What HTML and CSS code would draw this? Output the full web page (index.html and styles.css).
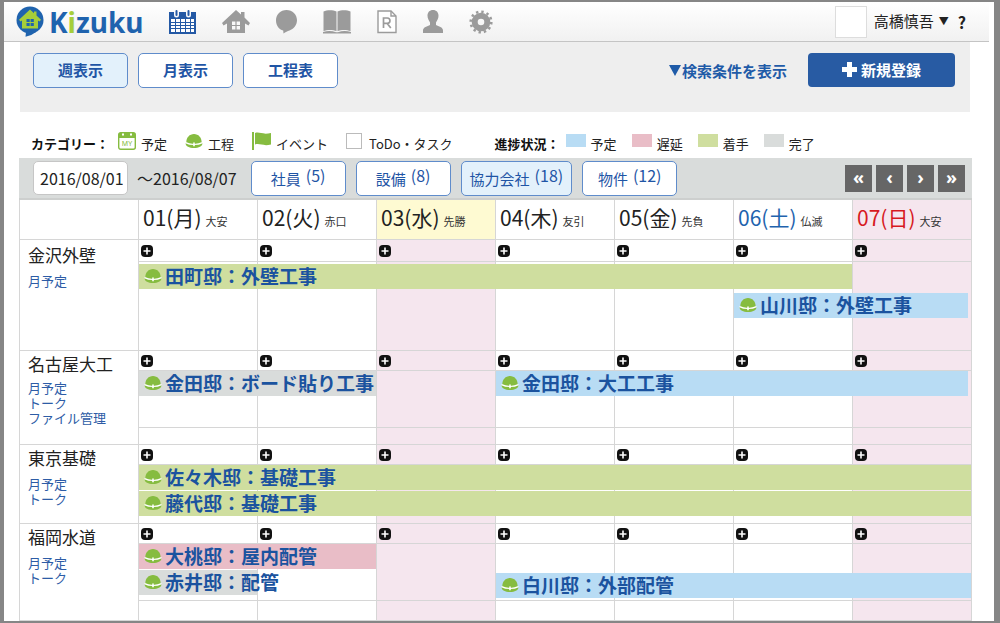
FILE: index.html
```html
<!DOCTYPE html>
<html lang="ja">
<head>
<meta charset="utf-8">
<meta name="viewport" content="width=device-width, initial-scale=1">
<title>Kizuku</title>
<link rel="stylesheet" href="styles.css">
</head>
<body>
<svg class="defs" aria-hidden="true">
  <symbol id="hat" viewBox="0 0 18 14">
    <path fill="#86bc40" d="M1.300 8.500C1.300 3.500 4.500 0 9 0s7.700 3.500 7.700 8.500l.8 1C17 12.300 14 14 9 14S1 12.300.5 9.500z"/>
    <path fill="none" stroke="#fff" stroke-width="1.200" d="M.5 8.600c4.700 2.500 12.300 2.500 17 0"/>
    <path fill="#fff" d="M8.200 8.500h1.600v3.700H8.200z"/>
  </symbol>
  <symbol id="plus" viewBox="0 0 12 12">
    <rect width="12" height="12" rx="4" fill="#111"/>
    <path d="M6 2.500v7M2.500 6h7" stroke="#fff" stroke-width="1.600"/>
  </symbol>
</svg>
<div class="window">
  <header class="topbar">
    <a class="logo" href="#">
      <svg width="28" height="31" viewBox="0 0 28 31" aria-hidden="true">
        <circle cx="14" cy="14" r="13.500" fill="#1f63ae"/>
        <path fill="#1f63ae" d="M8 25l12 1q-4 3.500-10.500 4.800L10 26z"/>
        <path fill="#a6ce39" d="M14 3.500l4 3.700V5.500h2.500v4l4.500 4.300-1.500 1.700-1.500-1v8H6v-8l-1.500 1L3 13.800z"/>
        <path fill="#1f63ae" d="M10.500 13h3.200v3h-3.200zM14.600 13h3.200v3h-3.200zM10.500 17h3.200v3h-3.200zM14.600 17h3.200v3h-3.200z"/>
      </svg>
      <span class="logo-text">K<span class="logo-i">i</span>zuku</span>
    </a>
    <nav class="nav">
      <a href="#" class="active" aria-label="カレンダー"><svg width="27" height="24" viewBox="0 0 27 24">
        <path fill="currentColor" d="M0 2h5v3a2.500 2.500 0 0 0 5 0V2h7v3a2.500 2.500 0 0 0 5 0V2h5v22H0z"/>
        <rect x="6.500" width="2" height="6" rx="1" fill="currentColor"/><rect x="18.500" width="2" height="6" rx="1" fill="currentColor"/>
        <path fill="#fff" d="M2 9h4v3H2zM7 9h4v3H7zM12 9h4v3h-4zM17 9h4v3h-4zM22 9h3v3h-3zM2 13h4v2H2zM7 13h4v2H7zM12 13h4v2h-4zM17 13h4v2h-4zM22 13h3v2h-3zM2 16h4v2H2zM7 16h4v2H7zM12 16h4v2h-4zM17 16h4v2h-4zM22 16h3v2h-3zM2 19h4v3H2zM7 19h4v3H7zM12 19h4v3h-4zM17 19h4v3h-4zM22 19h3v3h-3z"/></svg></a>
      <a href="#" aria-label="ホーム"><svg width="28" height="24" viewBox="0 0 28 24">
        <path fill="currentColor" d="M14 0l5 4.500V2h3.500v5.500L28 13l-1.500 2.500-3.500-2V23H5v-9.500l-3.500 2L0 13z"/>
        <path fill="#f8f8f8" d="M10 11.500h3.400v3.400H10zM14.600 11.500H18v3.400h-3.400zM10 16h3.400v3.400H10zM14.600 16H18v3.400h-3.400z"/></svg></a>
      <a href="#" aria-label="トーク"><svg width="21" height="24" viewBox="0 0 21 24">
        <path fill="currentColor" d="M10.500 0C16.500 0 21 4.500 21 10.300c0 5-3.500 8.700-7.500 10.200-2 .8-4 1.500-6 3l-.3-3C3 19.500 0 15.500 0 10.300 0 4.500 4.500 0 10.500 0z"/></svg></a>
      <a href="#" aria-label="台帳"><svg width="28" height="24" viewBox="0 0 28 24">
        <path fill="currentColor" d="M.5 1.500C4-.3 10-.3 13.500 1.500V21C10 19.500 4 19.500.5 21zM14.500 1.500C18-.3 24-.3 27.500 1.500V21c-3.500-1.500-9.500-1.500-13 0z"/>
        <path fill="currentColor" d="M0 22c5-1.500 9-1.200 13 .3h2c4-1.500 8-1.800 13-.3v1.500H0z"/></svg></a>
      <a href="#" aria-label="報告書"><svg width="20" height="24" viewBox="0 0 20 24">
        <path fill="#fff" stroke="currentColor" stroke-width="1.400" d="M1 1h13l5 5v16.500H1z"/>
        <path fill="none" stroke="currentColor" stroke-width="1.400" d="M14 1v5h5"/>
        <path fill="none" stroke="currentColor" stroke-width="1.700" d="M6.500 18V8h3.800a2.600 2.600 0 0 1 0 5.300H6.500M10 13.300l3.800 4.700"/></svg></a>
      <a href="#" aria-label="プロフィール"><svg width="20" height="24" viewBox="0 0 20 24">
        <path fill="currentColor" d="M10 0c3.400 0 5.500 2.300 5.500 5.800 0 3-1.500 5-2.500 6.700v2.500c2.500 1.500 7 2 7 5.500V23H0v-2.500C0 17 4.500 16.500 7 15v-2.500C6 10.800 4.500 8.800 4.500 5.800 4.500 2.300 6.600 0 10 0z"/></svg></a>
      <a href="#" aria-label="設定"><svg width="24" height="24" viewBox="0 0 24 24">
        <circle cx="12" cy="12" r="10.300" fill="none" stroke="currentColor" stroke-width="2.600" stroke-dasharray="2.400 2.993"/>
        <circle cx="12" cy="12" r="6.300" fill="none" stroke="currentColor" stroke-width="6"/></svg></a>
    </nav>
    <div class="account">
      <span class="avatar"></span>
      <button type="button" class="user">高橋慎吾<span class="caret">▼</span></button>
      <a class="help" href="#">?</a>
    </div>
  </header>

  <main class="main">
    <section class="panel">
      <div class="views">
        <button type="button" class="btn selected">週表示</button>
        <button type="button" class="btn">月表示</button>
        <button type="button" class="btn">工程表</button>
      </div>
      <div class="actions">
        <a class="search-toggle" href="#"><svg width="12" height="11" viewBox="0 0 12 11" aria-hidden="true"><path fill="currentColor" d="M0 0h12L6 11z"/></svg>検索条件を表示</a>
        <button type="button" class="create"><svg width="15" height="15" viewBox="0 0 15 15" aria-hidden="true"><path fill="#fff" d="M5 0h5v5h5v5h-5v5H5v-5H0V5h5z"/></svg>新規登録</button>
      </div>
    </section>

    <section class="legend">
      <div class="legend-group">
        <strong>カテゴリー：</strong>
        <span class="key"><svg width="18" height="18" viewBox="0 0 18 18" aria-hidden="true">
          <rect x=".7" y=".7" width="16.600" height="16.600" rx="2" fill="#fff" stroke="#86bc40" stroke-width="1.400"/>
          <path fill="#86bc40" d="M1 1h16v5H1z"/><path fill="#fff" d="M4 1.500h2v2H4zM12 1.500h2v2h-2z"/>
          <text class="my" x="9" y="14" text-anchor="middle">MY</text></svg><span>予定</span></span>
        <span class="key"><svg width="18" height="14"><use href="#hat"/></svg><span>工程</span></span>
        <span class="key"><svg width="19" height="18" viewBox="0 0 19 18" aria-hidden="true">
          <path fill="#86bc40" d="M0 0h2v18H0zM3 1c5-1.500 7 2 16 0v11.500c-8 2-11-1.500-16 0z"/></svg><span>イベント</span></span>
        <label class="key todo"><input type="checkbox"><span>ToDo・タスク</span></label>
      </div>
      <div class="legend-group status">
        <strong>進捗状況：</strong>
        <span class="key"><i class="swatch blue"></i><span>予定</span></span>
        <span class="key"><i class="swatch pink"></i><span>遅延</span></span>
        <span class="key"><i class="swatch green"></i><span>着手</span></span>
        <span class="key"><i class="swatch gray"></i><span>完了</span></span>
      </div>
    </section>

    <section class="filters">
      <input class="date" type="text" value="2016/08/01" aria-label="開始日">
      <span class="until">～2016/08/07</span>
      <div class="groups">
        <button type="button" class="btn">社員<span class="count">(5)</span></button>
        <button type="button" class="btn">設備<span class="count">(8)</span></button>
        <button type="button" class="btn selected">協力会社<span class="count">(18)</span></button>
        <button type="button" class="btn">物件<span class="count">(12)</span></button>
      </div>
      <div class="pager">
        <button type="button" aria-label="前の週">«</button>
        <button type="button" aria-label="前の日">‹</button>
        <button type="button" aria-label="次の日">›</button>
        <button type="button" aria-label="次の週">»</button>
      </div>
    </section>

    <table class="schedule">
      <thead>
        <tr>
          <td></td>
          <th scope="col">01(月)<small>大安</small></th>
          <th scope="col">02(火)<small>赤口</small></th>
          <th scope="col" class="today">03(水)<small>先勝</small></th>
          <th scope="col">04(木)<small>友引</small></th>
          <th scope="col">05(金)<small>先負</small></th>
          <th scope="col" class="sat">06(土)<small>仏滅</small></th>
          <th scope="col" class="sun">07(日)<small>大安</small></th>
        </tr>
      </thead>
      <tbody>
        <tr class="roomy">
          <th scope="row"><div class="name">金沢外壁</div><a href="#">月予定</a></th>
          <td><div class="add"><button type="button" aria-label="追加"><svg><use href="#plus"/></svg></button></div>
            <div class="lanes"><a href="#" class="bar green" style="--span:6"><svg><use href="#hat"/></svg>田町邸：外壁工事</a></div></td>
          <td><div class="add"><button type="button" aria-label="追加"><svg><use href="#plus"/></svg></button></div></td>
          <td class="off"><div class="add"><button type="button" aria-label="追加"><svg><use href="#plus"/></svg></button></div></td>
          <td><div class="add"><button type="button" aria-label="追加"><svg><use href="#plus"/></svg></button></div></td>
          <td><div class="add"><button type="button" aria-label="追加"><svg><use href="#plus"/></svg></button></div></td>
          <td><div class="add"><button type="button" aria-label="追加"><svg><use href="#plus"/></svg></button></div>
            <div class="lanes"><div class="empty"></div><a href="#" class="bar blue short" style="--span:2"><svg><use href="#hat"/></svg>山川邸：外壁工事</a></div></td>
          <td class="off"><div class="add"><button type="button" aria-label="追加"><svg><use href="#plus"/></svg></button></div></td>
        </tr>
        <tr class="ruled compact">
          <th scope="row"><div class="name">名古屋大工</div><a href="#">月予定</a><a href="#">トーク</a><a href="#">ファイル管理</a></th>
          <td><div class="add"><button type="button" aria-label="追加"><svg><use href="#plus"/></svg></button></div>
            <div class="lanes"><a href="#" class="bar gray" style="--span:2"><svg><use href="#hat"/></svg>金田邸：ボード貼り工事</a></div></td>
          <td><div class="add"><button type="button" aria-label="追加"><svg><use href="#plus"/></svg></button></div><div class="lanes"></div></td>
          <td class="off"><div class="add"><button type="button" aria-label="追加"><svg><use href="#plus"/></svg></button></div><div class="lanes"></div></td>
          <td><div class="add"><button type="button" aria-label="追加"><svg><use href="#plus"/></svg></button></div>
            <div class="lanes"><a href="#" class="bar blue short" style="--span:4"><svg><use href="#hat"/></svg>金田邸：大工工事</a></div></td>
          <td><div class="add"><button type="button" aria-label="追加"><svg><use href="#plus"/></svg></button></div><div class="lanes"></div></td>
          <td><div class="add"><button type="button" aria-label="追加"><svg><use href="#plus"/></svg></button></div><div class="lanes"></div></td>
          <td class="off"><div class="add"><button type="button" aria-label="追加"><svg><use href="#plus"/></svg></button></div><div class="lanes"></div></td>
        </tr>
        <tr>
          <th scope="row"><div class="name">東京基礎</div><a href="#">月予定</a><a href="#">トーク</a></th>
          <td><div class="add"><button type="button" aria-label="追加"><svg><use href="#plus"/></svg></button></div>
            <div class="lanes"><a href="#" class="bar green" style="--span:7"><svg><use href="#hat"/></svg>佐々木邸：基礎工事</a><a href="#" class="bar green" style="--span:7"><svg><use href="#hat"/></svg>藤代邸：基礎工事</a></div></td>
          <td><div class="add"><button type="button" aria-label="追加"><svg><use href="#plus"/></svg></button></div></td>
          <td class="off"><div class="add"><button type="button" aria-label="追加"><svg><use href="#plus"/></svg></button></div></td>
          <td><div class="add"><button type="button" aria-label="追加"><svg><use href="#plus"/></svg></button></div></td>
          <td><div class="add"><button type="button" aria-label="追加"><svg><use href="#plus"/></svg></button></div></td>
          <td><div class="add"><button type="button" aria-label="追加"><svg><use href="#plus"/></svg></button></div></td>
          <td class="off"><div class="add"><button type="button" aria-label="追加"><svg><use href="#plus"/></svg></button></div></td>
        </tr>
        <tr class="ruled">
          <th scope="row"><div class="name">福岡水道</div><a href="#">月予定</a><a href="#">トーク</a></th>
          <td><div class="add"><button type="button" aria-label="追加"><svg><use href="#plus"/></svg></button></div>
            <div class="lanes"><a href="#" class="bar pink" style="--span:2"><svg><use href="#hat"/></svg>大桃邸：屋内配管</a><a href="#" class="bar gray" style="--span:1"><svg><use href="#hat"/></svg>赤井邸：配管</a></div></td>
          <td><div class="add"><button type="button" aria-label="追加"><svg><use href="#plus"/></svg></button></div><div class="lanes"></div></td>
          <td class="off"><div class="add"><button type="button" aria-label="追加"><svg><use href="#plus"/></svg></button></div><div class="lanes"></div></td>
          <td><div class="add"><button type="button" aria-label="追加"><svg><use href="#plus"/></svg></button></div>
            <div class="lanes"><div class="empty"></div><a href="#" class="bar blue" style="--span:4"><svg><use href="#hat"/></svg>白川邸：外部配管</a></div></td>
          <td><div class="add"><button type="button" aria-label="追加"><svg><use href="#plus"/></svg></button></div><div class="lanes"></div></td>
          <td><div class="add"><button type="button" aria-label="追加"><svg><use href="#plus"/></svg></button></div><div class="lanes"></div></td>
          <td class="off"><div class="add"><button type="button" aria-label="追加"><svg><use href="#plus"/></svg></button></div><div class="lanes"></div></td>
        </tr>
      </tbody>
    </table>
  </main>
</div>
</body>
</html>
```

FILE: styles.css
```css
* { box-sizing: border-box; }

body {
  margin: 0;
  background: #fff;
  color: #222;
  font-family: "Noto Sans CJK JP", "Noto Sans", sans-serif;
  font-size: 13px;
}

a { color: inherit; text-decoration: none; }
button, input { font: inherit; color: inherit; }
button { cursor: pointer; }
svg { display: block; flex: none; }
.defs { position: absolute; width: 0; height: 0; }

.window {
  min-height: 100vh;
  border: solid #868686;
  border-width: 2px 6px 2px 4px;
}

/* Top bar */
.topbar {
  display: flex;
  align-items: center;
  height: 40px;
  margin-right: 5px;
  padding: 0 23px 0 12px;
  border-bottom: 1px solid #c4c4c4;
  background: linear-gradient(#fff, #f1f1f1);
}
.logo { display: flex; align-items: center; gap: 5px; }
.logo-text {
  color: #1f63ae;
  font: bold 28px/30px "Noto Sans", sans-serif;
}
.logo-i { color: #a6ce39; }
.nav {
  display: flex;
  align-items: center;
  gap: 26px;
  margin-left: 25px;
  color: #9b9b9b;
}
.nav .active { color: #2459a5; }
.account { display: flex; align-items: center; gap: 7px; margin-left: auto; }
.avatar { width: 32px; height: 32px; border: 1px solid #ddd; background: #fff; }
.user {
  display: flex;
  align-items: center;
  gap: 5px;
  margin-right: 2px;
  padding: 0 0 2px;
  border: 0;
  background: none;
  font-size: 15px;
}
.caret { font-size: 10px; }
.help { font-size: 16px; font-weight: bold; }

.main { padding: 0 22px 0 15px; }

/* Buttons */
.btn {
  min-width: 95px;
  height: 35px;
  padding: 0 8px;
  border: 1px solid #5f8ccb;
  border-radius: 5px;
  background: #fff;
  color: #1f55a5;
  font-size: 15px;
  white-space: nowrap;
}
.btn.selected { background: #e3f1fb; }

/* View switch and actions */
.panel {
  display: flex;
  justify-content: space-between;
  align-items: flex-start;
  height: 70px;
  margin: 0 2px 0 1px;
  padding: 11px 15px 0 13px;
  background: #eee;
}
.views { display: flex; gap: 10px; }
.views .btn { padding-bottom: 3px; font-weight: bold; }
.actions {
  display: flex;
  align-items: center;
  gap: 21px;
  color: #1f5ba8;
  font-size: 15px;
  font-weight: bold;
}
.search-toggle { display: flex; align-items: center; gap: 1px; }
.create {
  display: flex;
  justify-content: center;
  align-items: center;
  gap: 4px;
  width: 147px;
  height: 34px;
  padding: 0 8px 2px;
  border: 0;
  border-radius: 4px;
  background: #285ba3;
  color: #fff;
}

/* Legend */
.legend {
  display: flex;
  gap: 42px;
  height: 46px;
  padding: 18px 0 0 12px;
  white-space: nowrap;
}
.legend-group { display: flex; align-items: flex-start; gap: 18px; line-height: 20px; }
.legend-group.status { gap: 15px; }
.legend-group strong { margin-right: -9px; padding-top: 4px; color: #111; font-size: 13px; }
.key { display: flex; align-items: center; gap: 5px; height: 21px; }
.key > span { padding-top: 7px; }
.my { fill: #86bc40; font: 7px "Noto Sans", sans-serif; }
.todo { gap: 7px; }
.todo input {
  appearance: none;
  width: 16px;
  height: 16px;
  margin: 0;
  border: 1px solid #bbb;
  background: #fff;
}
.swatch { width: 20px; height: 13px; }

.blue { background: #b8dcf4; }
.pink { background: #e9bdc7; }
.green { background: #cfde9f; }
.gray { background: #d9dcdb; }

/* Filter bar */
.filters {
  display: flex;
  align-items: center;
  gap: 9px;
  height: 42px;
  padding: 0 7px 0 14px;
  border-bottom: 2px solid #cdcfce;
  background: #d9dcdb;
}
.date {
  width: 95px;
  height: 34px;
  padding: 0 4px 0 6px;
  border: 1px solid #c6c6c6;
  border-radius: 5px;
  background: #fff;
  font-size: 16px;
}
.until { font-size: 16px; white-space: nowrap; }
.groups { display: flex; gap: 10px; margin-left: 5px; }
.count { position: relative; top: -3px; margin-left: 5px; font-size: 16px; }
.pager { display: flex; gap: 4px; margin-left: auto; }
.pager button {
  width: 27px;
  height: 27px;
  padding: 0 0 3px;
  border: 0;
  background: #666;
  color: #fff;
  font: bold 18px/24px "Noto Sans", sans-serif;
}

/* Weekly schedule */
.schedule {
  width: 100%;
  table-layout: fixed;
  border-collapse: separate;
  border-spacing: 0;
  border-left: 1px solid #d6d6d6;
}
.schedule th, .schedule td {
  padding: 0;
  border: solid #d6d6d6;
  border-width: 0 1px 1px 0;
  font-weight: normal;
  text-align: left;
  vertical-align: top;
}
.schedule thead th {
  height: 40px;
  padding-left: 4px;
  font-size: 21px;
  line-height: 34px;
  white-space: nowrap;
}
.schedule small { margin-left: 4px; color: #333; font-size: 11px; }
.schedule .today { background: #fefad2; }
.schedule .sat { color: #1f63ae; }
.schedule .sun { background: #f5e6ee; color: #d7191f; }
.schedule .off { background: #f5e6ee; }

.schedule tbody tr { height: 79px; }
.schedule tbody .roomy { height: 111px; }
.schedule tbody .compact { height: 94px; }
.schedule tbody tr:last-child { height: 97px; }

.schedule tbody th { padding: 3px 0 0 8px; color: #2d5ca6; line-height: 15px; }
.schedule tbody th a { display: block; }
.name { margin-bottom: 8px; color: #222; font-size: 17px; line-height: 20px; }
.roomy .name { margin-top: 2px; }
.compact .name { margin-bottom: 6px; }

.add { height: 20px; padding: 4px 0 0 2px; border-bottom: 1px solid #d6d6d6; }
.roomy .add { height: 22px; padding-top: 5px; }
.add button { display: block; padding: 0; border: 0; background: none; }
.add svg { width: 12px; height: 12px; }

.lanes { display: flex; flex-direction: column; gap: 1px; }
.roomy .lanes { padding-top: 2px; }
.ruled .lanes { height: 57px; border-bottom: 1px solid #d6d6d6; }
.empty { height: 28px; }
.bar {
  position: relative;
  z-index: 1;
  display: flex;
  flex: none;
  align-items: center;
  gap: 3px;
  width: calc(var(--span) * (100% + 1px) - 1px);
  height: 25px;
  padding: 0 0 1px 5px;
  color: #1b539f;
  font-size: 19px;
  font-weight: bold;
  line-height: 24px;
  white-space: nowrap;
}
.bar.short { width: calc(var(--span) * (100% + 1px) - 4px); }
.bar svg { width: 18px; height: 14px; }
```
